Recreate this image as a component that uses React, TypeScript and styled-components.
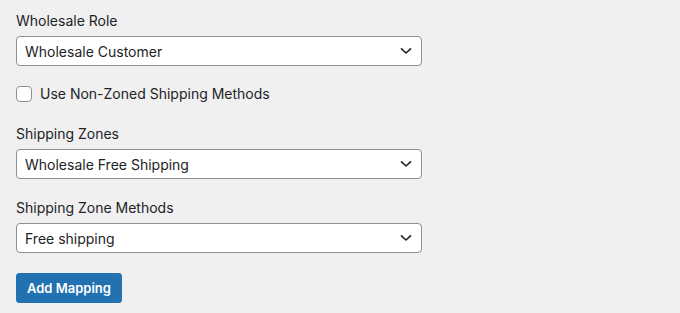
import styled, { createGlobalStyle } from "styled-components";

const GlobalStyle = createGlobalStyle`
    html, body {
        margin: 0;
        padding: 0;
        background: #f0f0f1;
    }
    body {
        font-family: Inter, "Noto Sans", "Liberation Sans", sans-serif;
        color: #1d2327;
    }
`

export const StyledForm = styled.form`
    width: 680px;
    min-height: 313px;
    box-sizing: border-box;
    padding: 11px 16px 0 16px;
    display: flex;
    flex-direction: column;
`

export const StyledField = styled.div<{ $space: number }>`
    display: flex;
    flex-direction: column;
    gap: 5px;
    margin-bottom: ${p => p.$space}px;
`

export const StyledLabel = styled.label`
    font-size: 14px;
    line-height: 20px;
    color: #1d2327;
`

export const StyledSelect = styled.div`
    width: 406px;
    height: 30px;
    box-sizing: border-box;
    border: 1px solid #8c8f94;
    border-radius: 4px;
    background: #fff;
    display: flex;
    align-items: center;
    justify-content: space-between;
    padding: 0 9px 0 8px;
    font-size: 14px;
    color: #1d2327;
`

export const StyledCheckRow = styled.label`
    display: flex;
    align-items: center;
    gap: 8px;
    font-size: 14px;
    line-height: 16px;
    margin: 0 0 22px 0;
`

export const StyledCheckbox = styled.span`
    width: 16px;
    height: 16px;
    box-sizing: border-box;
    border: 1px solid #8c8f94;
    border-radius: 4px;
    background: #fff;
`

export const StyledButton = styled.button`
    align-self: flex-start;
    height: 30px;
    padding: 0 10px;
    border: 1px solid #2271b1;
    border-radius: 3px;
    background: #2271b1;
    color: #fff;
    font-family: inherit;
    font-size: 13px;
    font-weight: 600;
`

const Chevron = () => (
    <svg width="12" height="8" viewBox="0 0 12 8" fill="none">
        <path d="M1.5 1.8 L6 6 L10.5 1.8" stroke="#1d2327" strokeWidth="1.6" strokeLinecap="round" strokeLinejoin="round"/>
    </svg>
)

function Select({ value }: { value: string }) {
    return (
        <StyledSelect>
            <span>{value}</span>
            <Chevron/>
        </StyledSelect>
    )
}

export default function App() {
    return (
        <>
            <GlobalStyle/>
            <StyledForm>
                <StyledField $space={20}>
                    <StyledLabel>Wholesale Role</StyledLabel>
                    <Select value="Wholesale Customer"/>
                </StyledField>
                <StyledCheckRow>
                    <StyledCheckbox/>
                    Use Non-Zoned Shipping Methods
                </StyledCheckRow>
                <StyledField $space={19}>
                    <StyledLabel>Shipping Zones</StyledLabel>
                    <Select value="Wholesale Free Shipping"/>
                </StyledField>
                <StyledField $space={20}>
                    <StyledLabel>Shipping Zone Methods</StyledLabel>
                    <Select value="Free shipping"/>
                </StyledField>
                <StyledButton type="button">Add Mapping</StyledButton>
            </StyledForm>
        </>
    )
}
